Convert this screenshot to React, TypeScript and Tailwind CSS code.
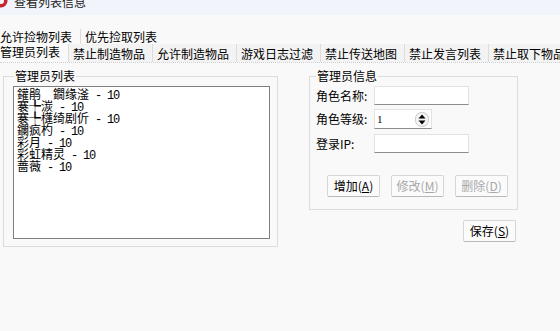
import React from "react";

const font = { fontFamily: '"Noto Sans CJK SC", "Liberation Sans", sans-serif' };
const mono = { fontFamily: '"Liberation Mono", "DejaVu Sans Mono", monospace' };

function Btn({ label, k, disabled }: { label: string; k: string; disabled?: boolean }) {
  return (
    <div
      className={`w-[53px] h-[22px] flex items-center justify-center text-[12px] leading-[12px] rounded-[2px] border border-[#d6d6d6] border-b-[#b8b8b8] bg-[#fbfbfb] ${
        disabled ? "text-[#a8a8a8]" : "text-black"
      }`}
    >
      {label}(<span className="underline">{k}</span>)
    </div>
  );
}

export default function App() {
  const items = ["鑵鹃\u3000鐗缘滏", "褰╄湠", "褰╄櫣绮剧伒", "鑭疯杓", "彩月", "彩虹精灵", "蔷薇"];
  const row2 = ["禁止制造物品", "允许制造物品", "游戏日志过滤", "禁止传送地图", "禁止发言列表", "禁止取下物品"];
  return (
    <div className="w-[560px] h-[331px] overflow-hidden bg-[#f9f9f9] text-black" style={font}>
      {/* title bar */}
      <div className="h-[15px] bg-[#f1f4fa] overflow-hidden flex items-end">
        <svg width="10" height="15" viewBox="0 0 10 15" className="shrink-0">
          <circle cx="1" cy="1" r="6.5" fill="#c6262e" />
          <circle cx="1" cy="1" r="3" fill="#f1f4fa" />
        </svg>
        <div className="ml-[4px] text-[12px] leading-[12px] mb-[7px] text-[#222] whitespace-nowrap">查看列表信息</div>
      </div>
      <div className="h-[14px]" />
      {/* tabs row 1 */}
      <div className="flex h-[15px] text-[12px] leading-[15px] whitespace-nowrap">
        <div className="w-[80px] shrink-0">允许捡物列表</div>
        <div className="w-[84px] shrink-0 pl-[4px] border-l border-[#dcdcdc]">优先捡取列表</div>
      </div>
      {/* tabs row 2 */}
      <div className="flex h-[18px] text-[12px] leading-[16px] whitespace-nowrap">
        <div className="w-[68px] shrink-0 bg-[#f9f9f9]">管理员列表</div>
        {row2.map((t) => (
          <div key={t} className="w-[84px] shrink-0 pl-[4px] pt-[2px] border-l border-[#dcdcdc] bg-[#f3f3f3]">
            {t}
          </div>
        ))}
      </div>
      {/* panel */}
      <div className="border-t border-dotted border-[#cfcfcf] flex pt-[6px]">
        <fieldset className="ml-[3px] w-[275px] h-[178px] border border-[#dcdcdc] px-[9px] pt-0 pb-0 m-0 min-w-0 shrink-0">
          <legend className="ml-[1px] px-[1px] text-[12px] leading-[14px]">管理员列表</legend>
          <div className="mt-[3px] w-[257px] h-[153px] bg-white border border-[#7f7f7f] pl-[3px] pt-[1px]">
            {items.map((s) => (
              <div key={s} className="text-[12px] leading-[12px] whitespace-nowrap h-[12px]">
                {s}
                <span className="text-[12px] tracking-[-1.2px]" style={mono}>
                  {" - 10"}
                </span>
              </div>
            ))}
          </div>
        </fieldset>
        <div className="ml-[31px] flex flex-col">
          <fieldset className="w-[209px] h-[141px] border border-[#dcdcdc] m-0 px-[6px] pt-0 pb-0 min-w-0">
            <legend className="px-[1px] text-[12px] leading-[14px]">管理员信息</legend>
            <div className="flex items-center mt-[3px] h-[19px]">
              <div className="w-[58px] text-[12px] leading-[12px]">角色名称:</div>
              <div className="w-[95px] h-[19px] bg-white border border-[#e3e3e3] border-b-[#8c8c8c]" />
            </div>
            <div className="flex items-center mt-[4px] h-[20px]">
              <div className="w-[58px] text-[12px] leading-[12px]">角色等级:</div>
              <div className="w-[58px] h-[20px] bg-white border border-[#e3e3e3] border-b-[#8c8c8c] flex items-center justify-between pl-[2px] pr-[2px]">
                <span className="text-[11px] leading-[11px]" style={{ fontFamily: '"Liberation Serif", serif' }}>1</span>
                <svg width="14" height="15" viewBox="0 0 14 15">
                  <rect x="0.5" y="0.5" width="13" height="14" rx="6" fill="#f4f4f4" stroke="#c8c8c8" />
                  <path d="M3.5 6.5 L7 2.5 L10.5 6.5 Z" fill="#000" />
                  <path d="M3.5 8.5 L7 12.5 L10.5 8.5 Z" fill="#000" />
                </svg>
              </div>
            </div>
            <div className="flex items-center mt-[5px] h-[19px]">
              <div className="w-[58px] text-[12px] leading-[12px]">登录IP:</div>
              <div className="w-[95px] h-[19px] bg-white border border-[#e3e3e3] border-b-[#8c8c8c]" />
            </div>
            <div className="flex gap-[11px] ml-[11px] mt-[22px]">
              <Btn label="增加" k="A" />
              <Btn label="修改" k="M" disabled />
              <Btn label="删除" k="D" disabled />
            </div>
          </fieldset>
          <div className="mt-[10px] ml-[154px]">
            <Btn label="保存" k="S" />
          </div>
        </div>
      </div>
    </div>
  );
}
